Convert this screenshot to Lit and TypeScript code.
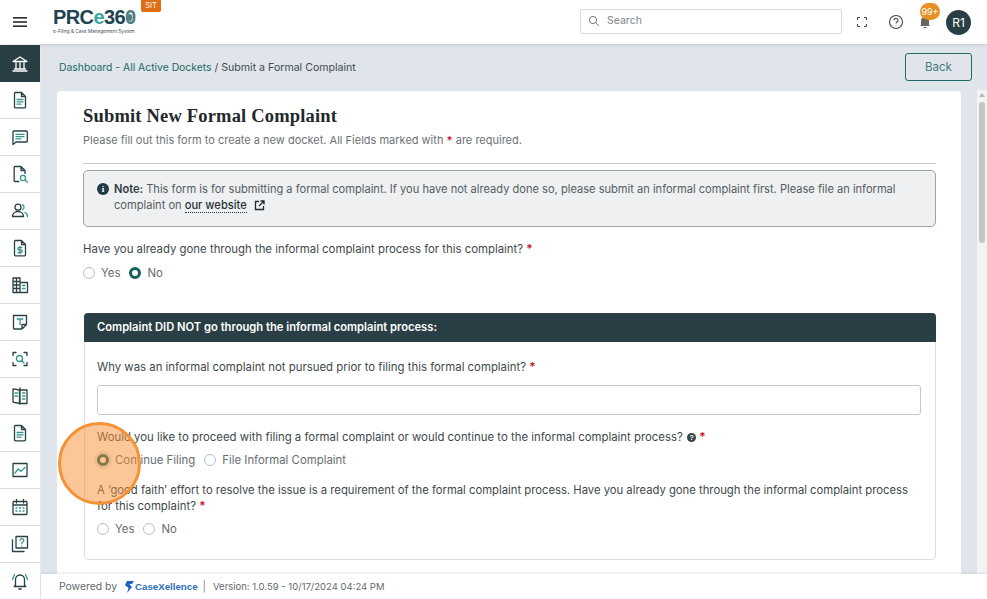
import { LitElement, html, css, svg } from "lit";
import { customElement } from "lit/decorators.js";

const D = "#2a4047";
const T = "#35968a";
const s = (c: any) => html`<svg width="20" height="20" viewBox="0 0 20 20" fill="none" stroke="${D}" stroke-width="1.3" stroke-linecap="round" stroke-linejoin="round">${c}</svg>`;
const t = (d: string) => svg`<path d="${d}" stroke="${T}"/>`;
const k = (d: string) => svg`<path d="${d}"/>`;

const doc = svg`${k("M5 2.5h6.5L15.5 6.5V17a.8.8 0 0 1-.8.8H5.3a.8.8 0 0 1-.8-.8V3.3a.8.8 0 0 1 .5-.8zM11.5 2.5v4h4")}${t("M7 9.5h6M7 11.8h6M7 14.1h4")}`;

const icons = [
  s(svg`<path stroke="#fff" d="M3 7.5 10 3l7 4.5zM3 17h14M4.5 15h11M6 9v5M10 9v5M14 9v5"/>`),
  s(doc),
  s(svg`${k("M3.5 4h13a.8.8 0 0 1 .8.8v9.4a.8.8 0 0 1-.8.8H6l-3 2.5V4.8a.8.8 0 0 1 .5-.8z")}${t("M6 7.3h8M6 9.6h8M6 11.9h5")}`),
  s(svg`${k("M9 17.5H5a.8.8 0 0 1-.8-.8V3.3a.8.8 0 0 1 .8-.8h6l4 4v3M11 2.5v4h4")}${svg`<circle cx="13" cy="14" r="2.6" stroke="${T}"/>`}${t("M15 16l2.3 2.2")}`),
  s(svg`<circle cx="8" cy="6.2" r="3"/>${k("M2.5 15.5c0-3 2.4-5 5.5-5s5.5 2 5.5 5z")}${t("M12.5 3.6a3 3 0 0 1 0 5.2M15 11.5c1.5.7 2.5 2 2.5 4")}`),
  s(svg`${k("M5 2.5h6.5l4 4V17a.8.8 0 0 1-.8.8H5.3a.8.8 0 0 1-.8-.8V3.3a.8.8 0 0 1 .5-.8zM11.5 2.5v4h4")}${t("M12 9.3H9.2a1.2 1.2 0 0 0 0 2.7h1.6a1.2 1.2 0 0 1 0 2.7H8M10 8.3v7.4")}`),
  s(svg`${k("M3 17.5V3h7v14.5M10 7.5h7.5v10H3M3 6.5h7M3 10h7M3 13.5h7M6.5 3v14.5")}${t("M12.5 10.5h2.5M12.5 13.5h2.5")}`),
  s(svg`${k("M3.5 3.5h13v9l-4.5 4.5H4.3a.8.8 0 0 1-.8-.8zM16.5 12.5H12V17")}${t("M7.2 7h5.6M10 7v5.5")}`),
  s(svg`${k("M3 6.500V3.500h3M14 3.500h3v3M3 13.500v3h3M14 16.500h3v-3")}${svg`<circle cx="9.500" cy="9.500" r="3" stroke="${T}"/>`}${t("M11.800 11.800l2.200 2.200")}`),
  s(svg`${k("M9.500 4 3 2.800v13.400L9.500 17.500zM10.500 4H17v13.500h-6.500M10 2v16")}${t("M5 7h2.500M5 10h2.500M12.500 7h2.500M12.500 10h2.500M12.500 13h2.500")}`),
  s(doc),
  s(svg`${k("M3 3.500h14v13H3z")}${t("M5 13l3.200-4 2.800 2.400L15 7.500")}`),
  s(svg`${k("M3.500 4.500h13a.8.8 0 0 1 .5.8v11.400a.8.8 0 0 1-.8.8H3.800a.8.8 0 0 1-.8-.8V5.300a.8.8 0 0 1 .5-.8zM3 8h14M6.500 2.500v3.500M13.500 2.500v3.500")}${t("M6 11h1M9.500 11h1M13 11h1M6 14h1M9.500 14h1M13 14h1")}`),
  s(svg`${k("M6 2.500h11.500v11.500H6zM2.500 6v11.500H14")}${t("M10 6.300a1.900 1.900 0 1 1 2.600 1.900c-.5.3-.8.7-.8 1.500M11.800 11.800v.1")}`),
  s(svg`${k("M5.500 14V8.500a4.500 4.500 0 0 1 9 0V14l1.300 1.500H4.200zM8.800 18h2.400")}${t("M4.500 3.500 2.500 8.500M15.500 3.500l2 5")}`),
];

@customElement("app-root")
export class AppRoot extends LitElement {
  static styles = css`
    :host { display: block; height: 599px; width: 987px; overflow: hidden; position: relative;
      font-family: "Inter", "Liberation Sans", sans-serif; font-size: 11px; color: #4b5458; background: #e0e5ec; }
    * { box-sizing: border-box; }
    svg { display: block; flex: none; }
    .top { height: 44px; background: #fff; display: flex; align-items: center; box-shadow: 0 1px 3px rgba(60,70,80,.18); position: relative; z-index: 2; }
    .burger { width: 40px; display: flex; justify-content: center; }
    .logo { margin-left: 13px; position: relative; width: 90px; align-self: flex-start; margin-top: 7px; }
    .brand { font: 700 20px/21px "Liberation Sans", sans-serif; color: #1d4450; letter-spacing: -0.6px; white-space: nowrap; }
    .brand b { color: #3aa89c; font-weight: 700; }
    .zero { color: #4d7c82; position: relative; display: inline-block; }
    .zero::after { content: ""; position: absolute; left: 3px; top: 7px; width: 4px; height: 7px; border-radius: 50%; background: #4d7c82; }
    .tag { font: 4.7px/6px "Inter", sans-serif; color: #3c5058; white-space: nowrap; }
    .sit { position: absolute; left: 88px; top: -7px; background: #e06c14; color: #fff; font-size: 7.5px; line-height: 12px; width: 20px; text-align: center; border-radius: 0 0 2px 2px; }
    .search { margin-left: 437px; width: 262px; height: 25px; margin-top: -1px; border: 1px solid #d8dcdf; border-radius: 2px; display: flex; align-items: center; gap: 7px; padding: 0 0 2px 7px; color: #80868a; font-size: 10.5px; }
    .tools { display: flex; align-items: center; margin-left: 15px; }
    .bellbox { position: relative; width: 24px; height: 22px; margin-left: 13px; margin-right: 5px; }
    .badge { position: absolute; left: 3px; top: -8px; background: #e89024; color: #fff; font-size: 9px; line-height: 17px; width: 20px; height: 17px; text-align: center; border-radius: 9px; }
    .avatar { width: 25px; height: 25px; border-radius: 50%; background: #2a3f45; color: #fff; text-align: center; line-height: 25px; font-size: 12px; }
    .help { margin-left: 21px; }
    .body { display: flex; height: 555px; }
    .side { width: 41px; background: #fff; flex: none; padding-top: 1px; border-right: 1px solid #e6e8ea; }
    .side div { height: 37px; display: flex; align-items: center; justify-content: center; border-bottom: 1px solid #d8dbdd; }
    .side div.on { background: #2a3f45; border-bottom: none; }
    .main { flex: 1; display: flex; flex-direction: column; min-width: 0; }
    .crumb { flex: none; display: flex; align-items: center; justify-content: space-between; height: 46px; padding: 9px 15px 9px 18px; font-size: 10.6px; color: #3f4a4e; }
    .crumb a { color: #1d6a66; font-size: 10.37px; }
    .back { width: 67px; height: 28px; border: 1px solid #1f6a68; border-radius: 3px; color: #4a7a7c; font-size: 11.5px; display: flex; align-items: center; justify-content: center; }
    .row { flex: 1; display: flex; overflow: hidden; min-height: 0; padding-left: 16px; justify-content: space-between; }
    .card { width: 904px; margin-top: 1px; background: #fff; border-radius: 4px 4px 0 0; padding: 14px 25px 0 26px; }
    h1 { margin: 0; font: 700 18.5px/22px "Liberation Serif", serif; color: #23282b; letter-spacing: .18px; }
    .sub { margin-top: 6px; line-height: 14px; color: #6d7275; }
    .req { color: #d0162c; font-weight: 700; }
    hr { border: 0; border-top: 1px solid #c9cccf; margin: 16px 0 6px; }
    .note { height: 57px; background: #eef0f2; border: 1px solid #9ba5a8; border-radius: 5px; padding: 10px 13px; line-height: 16px; color: #555c60; display: flex; gap: 5px; font-size: 11.1px; }
    .note .i { width: 12px; height: 12px; border-radius: 50%; background: #1f3b46; color: #fff; font: 700 9px/12px "Liberation Serif", serif; text-align: center; margin-top: 2px; flex: none; }
    .note strong { color: #2e3a3e; font-weight: 600; }
    .note a { color: #243136; border-bottom: 1px dotted #243136; font-weight: 500; }
    .ext { display: inline-block; vertical-align: -2px; margin-left: 4px; }
    .line { white-space: nowrap; }
    .q { line-height: 16px; color: #40484c; font-size: 11.38px; white-space: nowrap; }
    .q.first { margin-top: 14px; }
    .q.tight { font-size: 11.27px; }
    .radios { display: flex; align-items: center; margin-top: 8px; height: 16px; color: #666c70; font-size: 11.38px; }
    .pbody .radios { margin-top: 7px; }
    .radio { width: 12px; height: 12px; border-radius: 50%; border: 1px solid #b9bec1; margin-right: 6px; flex: none; }
    .radio.on { border: 3.5px solid #14615c; background: #fff; }
    .radio.focus { box-shadow: 0 0 0 3px rgba(20,97,92,.14); }
    .radios span { margin-right: 9px; }
    .panel { margin-top: 32px; margin-left: 1px; border: 1px solid #dcdfe1; border-radius: 4px; height: 247px; }
    .phead { height: 29px; margin: -1px -1px 0; background: #2a3f45; color: #fff; font-weight: 600; line-height: 29px; padding-left: 13px; border-radius: 4px 4px 0 0; font-size: 11.2px; }
    .pbody { padding: 17px 14px 0 12px; }
    .input { height: 30px; border: 1px solid #c5c9cc; border-radius: 3px; margin-top: 10px; margin-bottom: 14px; }
    .help2 { display: inline-block; width: 9px; height: 9px; background: #3a4548; color: #fff; border-radius: 50%; font: 700 7px/9px "Liberation Sans", sans-serif; text-align: center; margin-left: 1px; vertical-align: 1px; }
    .mt { margin-top: 14px; }
    .bar { width: 10px; flex: none; background: #f3f3f4; position: relative; display: flex; flex-direction: column; align-items: center; padding-top: 3px; }
    .arrow { width: 0; height: 0; border: 3px solid transparent; border-top: 0; border-bottom: 4px solid #b5b5b5; }
    .thumb { width: 6px; height: 141px; margin-top: 5px; background: #c6c6c6; border-radius: 3px; }
    .foot { height: 25px; flex: none; background: #fff; display: flex; align-items: center; padding-left: 18px; font-size: 10.4px; color: #63696c; box-shadow: 0 -1px 2px rgba(60,70,80,.12); position: relative; }
    .cx { color: #2a6db8; font: 700 9.7px "Liberation Sans", sans-serif; margin: 0 5px 0 8px; display: flex; align-items: center; gap: 1px; }
    .sep { margin-right: 7px; color: #888; }
    .ver { font-size: 9.5px; }
    .spot { position: absolute; left: 58px; top: 422px; width: 83px; height: 83px; border-radius: 50%; background: rgba(247,143,52,.5); border: 3px solid #f59238; }
  `;
  render() {
    return html`
      <div class="top">
        <div class="burger"><svg width="16" height="12" viewBox="0 0 16 12" fill="#2a2f33"><rect x="1" y="1" width="14" height="1.6"/><rect x="1" y="5.2" width="14" height="1.6"/><rect x="1" y="9.4" width="14" height="1.6"/></svg></div>
        <div class="logo">
          <div class="brand">PRC<b>e</b>36<span class="zero">0</span></div>
          <div class="tag">e-Filing &amp; Case Management System</div>
          <div class="sit">SIT</div>
        </div>
        <div class="search"><svg width="12" height="12" viewBox="0 0 12 12" fill="none" stroke="#777" stroke-width="1"><circle cx="5" cy="5" r="3.6"/><path d="M7.7 7.7 11 11"/></svg>Search</div>
        <div class="tools">
          <svg width="10" height="10" viewBox="0 0 10 10" fill="none" stroke="#444" stroke-width="1"><path d="M.5 3V.5H3M7 .5h2.500V3M.5 7v2.500H3M7 9.500h2.500V7"/></svg>
          <svg class="help" width="16" height="16" viewBox="0 0 16 16" fill="none" stroke="#444" stroke-width="1.100"><circle cx="8" cy="8" r="6.500"/><path d="M6 6.300a2 2 0 1 1 3 1.700c-.7.4-1 .8-1 1.600M8 11.500v.4"/></svg>
          <div class="bellbox"><svg width="14" height="14" viewBox="0 0 14 14" fill="#666" style="margin:4px 0 0 1px"><path d="M3 10V6a4 4 0 0 1 8 0v4l1 1H2zM5.500 12h3v1h-3z"/></svg><div class="badge">99+</div></div>
          <div class="avatar">R1</div>
        </div>
      </div>
      <div class="body">
        <nav class="side">${icons.map((ic, i) => html`<div class="${i === 0 ? "on" : ""}">${ic}</div>`)}</nav>
        <div class="main">
          <div class="crumb"><span><a>Dashboard - All Active Dockets</a> / Submit a Formal Complaint</span><div class="back">Back</div></div>
          <div class="row">
            <div class="card">
              <h1>Submit New Formal Complaint</h1>
              <div class="sub">Please fill out this form to create a new docket. All Fields marked with <span class="req">*</span> are required.</div>
              <hr />
              <div class="note"><div class="i">i</div><div>
                <div class="line"><strong>Note:</strong> This form is for submitting a formal complaint. If you have not already done so, please submit an informal complaint first. Please file an informal</div>
                <div class="line">complaint on <a>our website</a> <svg class="ext" width="11" height="11" viewBox="0 0 11 11" fill="none" stroke="#1f2a2e" stroke-width="1.300"><path d="M5 1.500H1.500v8h8V6M6.500 1h3.500v3.500M10 1 5 6"/></svg></div>
              </div></div>
              <div class="q first">Have you already gone through the informal complaint process for this complaint? <span class="req">*</span></div>
              <div class="radios"><i class="radio"></i><span>Yes</span><i class="radio on"></i><span>No</span></div>
              <div class="panel">
                <div class="phead">Complaint DID NOT go through the informal complaint process:</div>
                <div class="pbody">
                  <div class="q">Why was an informal complaint not pursued prior to filing this formal complaint? <span class="req">*</span></div>
                  <div class="input"></div>
                  <div class="q">Would you like to proceed with filing a formal complaint or would continue to the informal complaint process? <span class="help2">?</span> <span class="req">*</span></div>
                  <div class="radios"><i class="radio on focus"></i><span>Continue Filing</span><i class="radio"></i><span>File Informal Complaint</span></div>
                  <div class="q mt tight">A ‘good faith’ effort to resolve the issue is a requirement of the formal complaint process. Have you already gone through the informal complaint process</div>
                  <div class="q">for this complaint? <span class="req">*</span></div>
                  <div class="radios"><i class="radio"></i><span>Yes</span><i class="radio"></i><span>No</span></div>
                </div>
              </div>
            </div>
            <div class="bar"><div class="arrow"></div><div class="thumb"></div></div>
          </div>
          <div class="foot">Powered by <span class="cx"><svg width="9" height="12" viewBox="0 0 9 12" fill="#1e63c0"><path d="M2 0h7L7 3H4.500L7 6l-5 6 1.500-5L0 4z"/></svg>CaseXellence</span><span class="sep">|</span><span class="ver">Version: 1.0.59 - 10/17/2024 04:24 PM</span></div>
        </div>
      </div>
      <div class="spot"></div>
    `;
  }
}
